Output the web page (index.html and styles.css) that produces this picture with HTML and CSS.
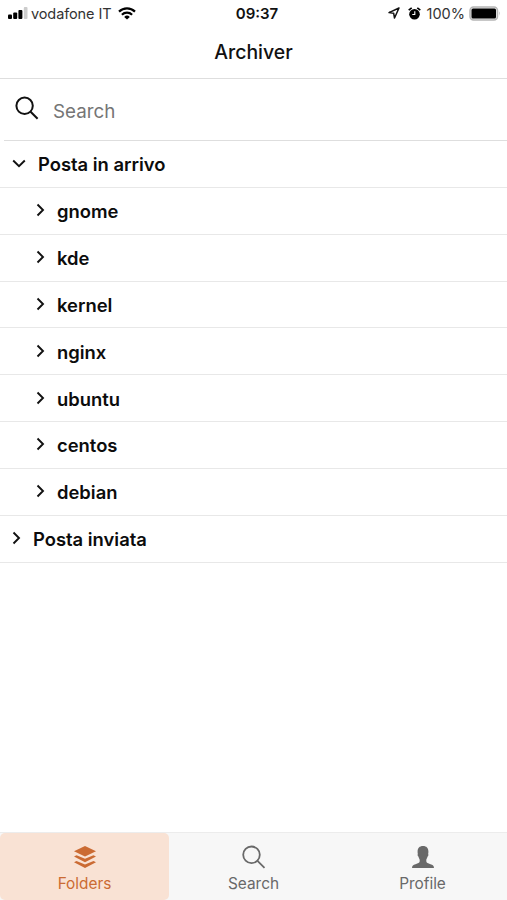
FILE: index.html
```html
<!DOCTYPE html>
<html lang="it">
<head>
  <meta charset="UTF-8">
  <meta name="viewport" content="width=device-width, initial-scale=1.0">
  <title>Archiver</title>
  <link rel="stylesheet" href="styles.css">
</head>
<body>
  <div class="app">
    <div class="status-bar">
      <div class="status-left">
        <svg class="signal" width="20" height="12" viewBox="0 0 20 12">
          <rect x="0" y="7.5" width="4" height="4.5" rx="1"/>
          <rect x="5.200" y="5.5" width="4" height="6.5" rx="1"/>
          <rect x="10.400" y="3" width="4" height="9" rx="1"/>
          <rect x="15.800" y="0" width="3.700" height="12" rx="1" fill="#ccc"/>
        </svg>
        <span class="carrier">vodafone IT</span>
        <svg class="wifi" width="18" height="13" viewBox="0 0 18 13" fill="none" stroke="#000" stroke-width="2.2">
          <path d="M1 4.6a11.5 11.5 0 0 1 16 0"/>
          <path d="M3.9 7.7a7.3 7.3 0 0 1 10.2 0"/>
          <path d="M9 12.6L6.2 9.9a4 4 0 0 1 5.6 0z" fill="#000" stroke="none"/>
        </svg>
      </div>
      <span class="time">09:37</span>
      <div class="status-right">
        <svg class="location" width="12" height="12" viewBox="0 0 12 12" fill="none" stroke="#111" stroke-width="1.5" stroke-linejoin="round">
          <path d="M11 1L1 5.6l4.7.7.8 4.7z"/>
        </svg>
        <svg class="alarm" width="13" height="13" viewBox="0 0 13 13">
          <circle cx="6.5" cy="7.200" r="5.300"/>
          <path d="M.7 3.2L3.7.9M12.3 3.2L9.3.9" stroke="#000" stroke-width="1.7"/>
          <path d="M6.8 4.2v3.3H4.3" fill="none" stroke="#fff" stroke-width="1.1"/>
        </svg>
        <span class="percent">100%</span>
        <svg class="battery" width="32" height="15" viewBox="0 0 32 15">
          <rect x="1" y="1" width="27.500" height="13" rx="3.5" fill="#e8e8e8" stroke="#b5b5b5" stroke-width="1.5"/>
          <rect x="2.5" y="2.5" width="24.5" height="10" rx="1.500"/>
          <path d="M30 5.300q1.600 2.200 0 4.400z" fill="#aaa"/>
        </svg>
      </div>
    </div>

    <header class="header">
      <h1>Archiver</h1>
    </header>

    <label class="search">
      <svg width="24" height="24" viewBox="0 0 24 24" fill="none" stroke="#111" stroke-width="2">
        <circle cx="9.6" cy="9.8" r="8.2"/>
        <path d="M15.6 15.8l7 7"/>
      </svg>
      <input type="text" placeholder="Search">
    </label>

    <ul class="folders">
      <li class="folder">
        <svg width="14" height="9" viewBox="0 0 14 9"><path d="M1.2 1.5L7 7.2l5.8-5.7"/></svg>
        <span>Posta in arrivo</span>
      </li>
      <li class="folder child">
        <svg width="9" height="14" viewBox="0 0 9 14"><path d="M1.5 1.5L7 7l-5.5 5.5"/></svg>
        <span>gnome</span>
      </li>
      <li class="folder child">
        <svg width="9" height="14" viewBox="0 0 9 14"><path d="M1.5 1.5L7 7l-5.5 5.5"/></svg>
        <span>kde</span>
      </li>
      <li class="folder child">
        <svg width="9" height="14" viewBox="0 0 9 14"><path d="M1.5 1.5L7 7l-5.5 5.5"/></svg>
        <span>kernel</span>
      </li>
      <li class="folder child">
        <svg width="9" height="14" viewBox="0 0 9 14"><path d="M1.5 1.5L7 7l-5.5 5.5"/></svg>
        <span>nginx</span>
      </li>
      <li class="folder child">
        <svg width="9" height="14" viewBox="0 0 9 14"><path d="M1.5 1.5L7 7l-5.5 5.5"/></svg>
        <span>ubuntu</span>
      </li>
      <li class="folder child">
        <svg width="9" height="14" viewBox="0 0 9 14"><path d="M1.5 1.5L7 7l-5.5 5.5"/></svg>
        <span>centos</span>
      </li>
      <li class="folder child">
        <svg width="9" height="14" viewBox="0 0 9 14"><path d="M1.5 1.5L7 7l-5.5 5.5"/></svg>
        <span>debian</span>
      </li>
      <li class="folder">
        <svg width="9" height="14" viewBox="0 0 9 14"><path d="M1.5 1.5L7 7l-5.5 5.5"/></svg>
        <span>Posta inviata</span>
      </li>
    </ul>

    <nav class="tabs">
      <a class="tab active">
        <svg width="22" height="24" viewBox="0 0 22 24" fill="currentColor">
          <path d="M11 1l11 5.3-11 5.2L0 6.3z"/>
          <path d="M0 11.5l2.5-1.2L11 13.700l8.500-3.400L22 11.500l-11 5.700z"/>
          <path d="M0 17.300l2.500-1.200L11 19.500l8.500-3.400L22 17.300l-11 5.700z"/>
        </svg>
        <span>Folders</span>
      </a>
      <a class="tab">
        <svg width="24" height="24" viewBox="0 0 24 24" fill="none" stroke="currentColor" stroke-width="1.8">
          <circle cx="9.5" cy="9.8" r="8.3"/>
          <path d="M15.5 15.8l7 7"/>
        </svg>
        <span>Search</span>
      </a>
      <a class="tab">
        <svg width="22" height="24" viewBox="0 0 22 24" fill="currentColor">
          <path d="M11 1c3.5 0 5.4 2.1 5.4 5.5 0 1.2 0 1.7-.3 2.4.6.4.3 2.2-.5 2.7-.3 1.5-1.300 2.500-1.300 3.500v1.200c0 1.500 1.700 2.100 4.200 3 2.300.8 3.400 1.500 3.500 3.700H0c.1-2.200 1.200-2.900 3.500-3.700 2.500-.9 4.200-1.500 4.200-3v-1.200c0-1-1-2-1.300-3.500-.8-.5-1.100-2.300-.5-2.700-.3-.7-.3-1.200-.3-2.400C5.600 3.100 7.500 1 11 1z"/>
        </svg>
        <span>Profile</span>
      </a>
    </nav>
  </div>
</body>
</html>
```
FILE: styles.css
```css
* {
  box-sizing: border-box;
}
body {
  margin: 0;
  background: #fff;
  color: #111;
  font-family: Inter, Roboto, "Liberation Sans", sans-serif;
}
.app {
  height: 100vh;
  display: flex;
  flex-direction: column;
  overflow: hidden;
}
.status-bar {
  height: 26px;
  flex: none;
  display: grid;
  grid-template-columns: 1fr auto 1fr;
  align-items: center;
  padding: 0 6px 0 8px;
  font-size: 14.5px;
}
.status-left, .status-right {
  display: flex;
  align-items: center;
}
.status-right {
  justify-content: flex-end;
}
.carrier {
  margin: 1px 7px 0 3px;
  color: #333;
  letter-spacing: -0.1px;
}
.time {
  margin-left: 5px;
  font-weight: 600;
  font-size: 15px;
}
.alarm {
  margin: 0 6px 0 8px;
}
.percent {
  margin: 1px 4px 0 0;
  color: #333;
}
.header {
  height: 53px;
  flex: none;
  display: flex;
  align-items: center;
  justify-content: center;
  border-bottom: 1px solid #dedede;
}
h1 {
  margin: 0;
  font-size: 19.4px;
  font-weight: 500;
}
.search {
  height: 62px;
  flex: none;
  display: flex;
  align-items: center;
  margin-left: 4px;
  padding-left: 11px;
  border-bottom: 1px solid #dedede;
}
.search svg {
  margin-bottom: 3px;
}
.search input {
  flex: 1;
  min-width: 0;
  margin: 3px 0 0 14px;
  padding: 0;
  border: none;
  outline: none;
  background: none;
  font: inherit;
  font-size: 18.8px;
}
.search input::placeholder {
  color: #757575;
}
.folders {
  flex: 1;
  margin: 0;
  padding: 0;
  list-style: none;
}
.folder {
  height: 46.85px;
  display: flex;
  align-items: center;
  gap: 12px;
  padding: 1px 0 0 12px;
  border-bottom: 1px solid #e8e8e8;
  color: #0c0c0c;
  font-size: 18.4px;
  font-weight: 600;
}
.folder.child {
  padding-left: 36px;
}
.folder svg {
  flex: none;
  margin-bottom: 2px;
  fill: none;
  stroke: #111;
  stroke-width: 1.9;
}
.tabs {
  height: 68px;
  flex: none;
  display: grid;
  grid-template-columns: repeat(3, 1fr);
  border-top: 1px solid #ececec;
  background: #f7f7f7;
}
.tab {
  display: flex;
  flex-direction: column;
  align-items: center;
  padding-top: 12px;
  border-radius: 5px;
  color: #696969;
  font-size: 15.4px;
}
.tab span {
  margin-top: 6px;
  line-height: 18px;
}
.tab.active {
  background: #f9e2d4;
  color: #cb6b33;
}
```
